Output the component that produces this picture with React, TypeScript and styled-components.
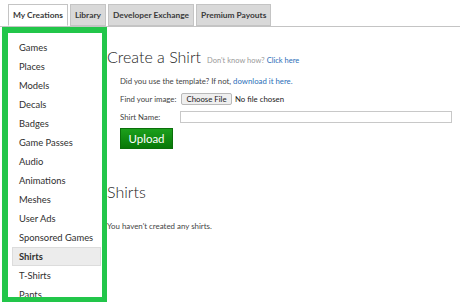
import React from "react";
import styled, { createGlobalStyle } from "styled-components";

const COLORS = {
  green: "#22c64a",
  tabGrey: "#d9d9d9",
  tabBorder: "#c4c4c4",
  text: "#333333",
  muted: "#9a9a9a",
  link: "#2a6eb8",
  select: "#ececec",
};

const GlobalStyle = createGlobalStyle`
  body {
    margin: 0;
    background: #ffffff;
    color: ${COLORS.text};
    font-family: Lato, "Open Sans", Arial, sans-serif;
    overflow: hidden;
  }
`;

const TabBar = styled.div`
  display: flex;
  padding: 4px 0 0 8px;
  border-bottom: 1px solid ${COLORS.tabBorder};
  height: 22px;
`;

const Tab = styled.div<{ $active?: boolean }>`
  height: 22px;
  box-sizing: border-box;
  padding: 0 4px;
  margin-right: 2px;
  display: flex;
  align-items: center;
  font-size: 8.4px;
  font-weight: 700;
  color: #3a3a3a;
  background: ${(p) => (p.$active ? "#ffffff" : COLORS.tabGrey)};
  border: 1px solid ${COLORS.tabBorder};
  border-bottom: ${(p) => (p.$active ? "1px solid #ffffff" : `1px solid ${COLORS.tabBorder}`)};
  white-space: nowrap;
`;

const Body = styled.div`
  display: flex;
  align-items: flex-start;
`;

const Sidebar = styled.nav`
  flex: none;
  width: 105px;
  height: 275px;
  box-sizing: border-box;
  margin: 0 0 0 2px;
  border: 6px solid ${COLORS.green};
  border-right-width: 5px;
  border-bottom-width: 5px;
  padding: 5px 0 0 0;
  overflow: hidden;
`;

const NavItem = styled.div<{ $selected?: boolean }>`
  height: 19px;
  box-sizing: border-box;
  display: flex;
  align-items: center;
  padding-left: 6px;
  margin: 0 1px 0 4px;
  font-size: 9.4px;
  white-space: nowrap;
  color: #2f2f2f;
  font-weight: ${(p) => (p.$selected ? 700 : 400)};
  background: ${(p) => (p.$selected ? COLORS.select : "transparent")};
  border: 1px solid ${(p) => (p.$selected ? "#dcdcdc" : "transparent")};
`;

const Main = styled.main`
  flex: 1;
  padding-top: 20px;
`;

const HeadingRow = styled.div`
  display: flex;
  align-items: baseline;
  gap: 6px;
`;

const Heading = styled.h1`
  margin: 0;
  font-size: 16px;
  line-height: 20px;
  font-weight: 300;
  color: #222;
`;

const Hint = styled.span`
  font-size: 7.5px;
  color: ${COLORS.muted};
`;

const Link = styled.a`
  color: ${COLORS.link};
  text-decoration: none;
`;

const Form = styled.div`
  padding: 5px 0 0 13px;
  display: flex;
  flex-direction: column;
`;

const Row = styled.div`
  display: flex;
  align-items: center;
  height: 18px;
  font-size: 7.8px;
  color: #444;
  white-space: nowrap;
`;

const Label = styled.span`
  width: 60px;
  flex: none;
`;

const FileButton = styled.button`
  height: 12px;
  box-sizing: border-box;
  width: 51px;
  padding: 0;
  margin-left: 1px;
  font-family: inherit;
  font-size: 7.8px;
  color: #222;
  background: #efefef;
  border: 1px solid #b9b9b9;
  border-radius: 2px;
  display: flex;
  align-items: center;
  justify-content: center;
`;

const NoFile = styled.span`
  margin-left: 3px;
  font-size: 7.8px;
  color: #222;
`;

const TextInput = styled.input`
  width: 272px;
  height: 12px;
  box-sizing: border-box;
  border: 1px solid #c8c8c8;
  padding: 0;
  margin: 0;
`;

const UploadButton = styled.button`
  align-self: flex-start;
  margin-top: 2px;
  width: 53px;
  height: 21px;
  border: 1px solid #0b6f0b;
  background: linear-gradient(#1ca01c, #087808);
  color: #ffffff;
  font-family: inherit;
  font-size: 11.5px;
  padding: 0;
`;

const SubHeading = styled.h2`
  margin: 33px 0 0 0;
  font-size: 16px;
  line-height: 20px;
  font-weight: 300;
  color: #222;
`;

const Empty = styled.p`
  margin: 19px 0 0 0;
  font-size: 7.9px;
  line-height: 10px;
  color: #444;
`;

const NAV = [
  "Games",
  "Places",
  "Models",
  "Decals",
  "Badges",
  "Game Passes",
  "Audio",
  "Animations",
  "Meshes",
  "User Ads",
  "Sponsored Games",
  "Shirts",
  "T-Shirts",
  "Pants",
];

const TABS = ["My Creations", "Library", "Developer Exchange", "Premium Payouts"];

const App: React.FC = () => (
  <>
    <GlobalStyle />
    <TabBar>
      {TABS.map((t, i) => (
        <Tab key={t} $active={i === 0}>
          {t}
        </Tab>
      ))}
    </TabBar>
    <Body>
      <Sidebar>
        {NAV.map((n) => (
          <NavItem key={n} $selected={n === "Shirts"}>
            {n}
          </NavItem>
        ))}
      </Sidebar>
      <Main>
        <HeadingRow>
          <Heading>Create a Shirt</Heading>
          <Hint>
            Don't know how? <Link href="#">Click here</Link>
          </Hint>
        </HeadingRow>
        <Form>
          <Row>
            Did you use the template? If not,&nbsp;<Link href="#">download it here.</Link>
          </Row>
          <Row>
            <Label>Find your image:</Label>
            <FileButton>Choose File</FileButton>
            <NoFile>No file chosen</NoFile>
          </Row>
          <Row>
            <Label>Shirt Name:</Label>
            <TextInput />
          </Row>
          <UploadButton>Upload</UploadButton>
        </Form>
        <SubHeading>Shirts</SubHeading>
        <Empty>You haven't created any shirts.</Empty>
      </Main>
    </Body>
  </>
);

export default App;
